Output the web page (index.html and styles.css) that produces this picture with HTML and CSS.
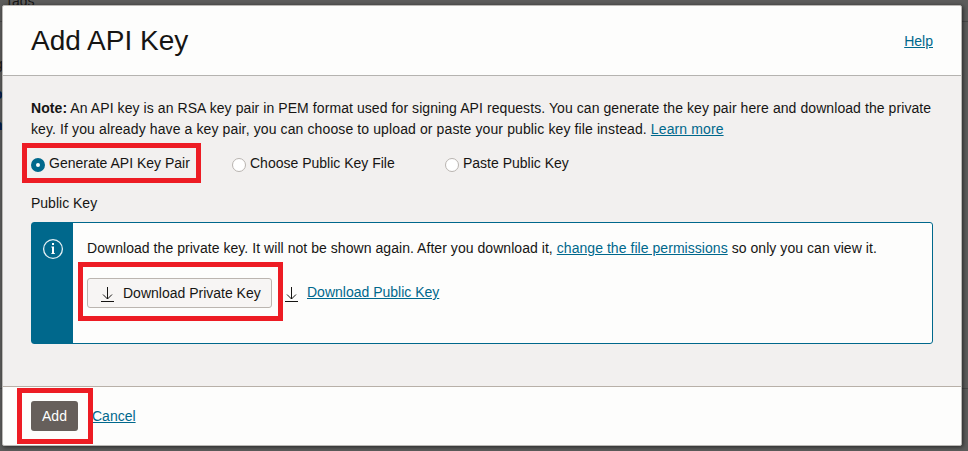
FILE: index.html
```
<!DOCTYPE html>
<html lang="en">
<head>
<meta charset="utf-8">
<title>Add API Key</title>
<link rel="stylesheet" href="styles.css">
</head>
<body>
<div class="backdrop">
  <span class="behind tags">Tags</span>
  <span class="behind rule-top"></span>
  <span class="behind rule-bottom"></span>
  <span class="behind frag-g">g</span>
  <span class="behind frag-o">o</span>
  <span class="behind frag-n">n</span>
</div>
<main class="dialog">
  <header class="dialog-header">
    <h1>Add API Key</h1>
    <a class="link help" href="#">Help</a>
  </header>
  <section class="dialog-body">
    <p class="note"><span class="line-one"><b>Note:</b> An API key is an RSA key pair in PEM format used for signing API requests. You can generate the key pair here and download the private</span><br><span class="line-two">key. If you already have a key pair, you can choose to upload or paste your public key file instead. <a class="link" href="#">Learn more</a></span></p>
    <div class="options">
      <div class="option marked mark-generate"><span class="radio checked"></span><span class="label">Generate API Key Pair</span></div>
      <div class="option"><span class="radio"></span><span class="label">Choose Public Key File</span></div>
      <div class="option"><span class="radio"></span><span class="label">Paste Public Key</span></div>
    </div>
    <div class="field-label">Public Key</div>
    <div class="info">
      <div class="info-side">
        <svg width="22" height="22" viewBox="0 0 22 22"><circle cx="11" cy="11" r="9.4" fill="none" stroke="#e4f0f4" stroke-width="1.3"/><path d="M10 5h2v2h-2zM9.4 8.6H12V15h.8v1H9.4v-1h.6V9.6h-.6z" fill="#fff"/></svg>
      </div>
      <div class="info-content">
        <p class="info-text">Download the private key. It will not be shown again. After you download it, <a class="link" href="#">change the file permissions</a> so only you can view it.</p>
        <div class="downloads">
          <button class="download-button marked mark-download"><svg width="13" height="15" viewBox="0 0 13 15"><path d="M6.5 0v12M2 7.5l4.5 4.5L11 7.5M0 14.5h13" fill="none" stroke="#161513"/></svg><span>Download Private Key</span></button>
          <svg class="public-icon" width="13" height="15" viewBox="0 0 13 15"><path d="M6.5 0v12M2 7.5l4.5 4.5L11 7.5M0 14.5h13" fill="none" stroke="#161513"/></svg>
          <a class="link public-link" href="#">Download Public Key</a>
        </div>
      </div>
    </div>
  </section>
  <footer class="dialog-footer">
    <button class="add-button marked mark-add">Add</button>
    <a class="link" href="#">Cancel</a>
  </footer>
</main>
</body>
</html>
```
FILE: styles.css
```
*, *::after { box-sizing: border-box; }
body {
  margin: 0;
  height: 451px;
  overflow: hidden;
  background: #5c5c5b;
  color: #161513;
  font: 14px/21px "Liberation Sans", Arial, sans-serif;
}
h1, p { margin: 0; font-weight: normal; }
button { font: inherit; color: inherit; margin: 0; }
.link { color: #00688c; text-decoration: underline; }
.backdrop { position: absolute; inset: 0; overflow: hidden; }
.behind { position: absolute; color: #171716; }
.tags { left: 5px; top: -9px; }
.rule-top { left: 0; right: 0; top: 21px; height: 1px; background: #484848; }
.rule-bottom { left: 0; right: 0; top: 388px; height: 1px; background: #484848; }
.frag-g { left: -5px; top: 54px; text-decoration: underline; }
.frag-o { left: -6px; top: 84px; color: #001b4b; font-weight: bold; }
.frag-n { left: -6px; top: 115px; color: #001b4b; font-weight: bold; }
.dialog {
  position: relative;
  display: flex;
  flex-direction: column;
  width: 960px;
  height: 441px;
  margin: 5px 0 0 2px;
  border: 1px solid #bab8b5;
  border-radius: 2px;
  background: #fdfdfc;
  box-shadow: 1px 1px 4px rgba(0, 0, 0, .6);
}
.dialog-header {
  display: flex;
  align-items: center;
  justify-content: space-between;
  height: 70px;
  padding: 0 28px;
  border-bottom: 1px solid #b5b3b0;
}
h1 { font-size: 28px; line-height: 36px; }
.help { padding-top: 2px; }
.dialog-body {
  height: 310px;
  padding: 22px 28px 0;
  background: #f2f0ef;
}
.note { white-space: nowrap; }
.line-one { letter-spacing: .076px; }
.line-two { letter-spacing: .114px; }
.options { display: flex; margin-top: 13px; }
.option { display: flex; align-items: center; height: 21px; width: 201px; }
.option:nth-child(2) { width: 213px; }
.radio {
  width: 14px;
  height: 14px;
  margin: 3px 4px 0 0;
  border: 1px solid #b9b4b0;
  border-radius: 50%;
  background: #fff;
}
.radio.checked { border: 5px solid #00688c; }
.field-label { margin-top: 19px; }
.info {
  display: flex;
  height: 122px;
  margin-top: 8px;
  border: 1px solid #00688c;
  border-radius: 3px;
  background: #fdfdfc;
}
.info-side { width: 41px; padding: 15px 0 0 10px; background: #00688c; }
.info-content { padding: 15px 0 0 14px; white-space: nowrap; }
.info-text { letter-spacing: .05px; }
.downloads { display: flex; margin-top: 19px; }
.download-button {
  display: flex;
  align-items: center;
  width: 185px;
  height: 30px;
  padding: 0 0 0 13px;
  border: 1px solid #bbb5b0;
  border-radius: 3px;
  background: #f7f5f4;
}
.download-button svg { margin: 3px 9px 0 0; }
.public-icon { margin: 9px 9px 0 13px; }
.public-link { margin-top: 4px; }
.dialog-footer {
  display: flex;
  align-items: center;
  height: 59px;
  padding: 0 28px;
  border-top: 1px solid #b8b0a8;
}
.add-button {
  width: 47px;
  height: 30px;
  margin-right: 14px;
  padding: 0;
  border: 0;
  border-radius: 3px;
  background: #665f5b;
  color: #fff;
}
.marked { position: relative; }
.marked::after { content: ""; position: absolute; border: 5px solid #ed1c24; }
.mark-generate::after { left: -9px; top: -10px; width: 179px; height: 40px; }
.mark-download::after { left: -10px; top: -17px; width: 205px; height: 59px; }
.mark-add::after { left: -14px; top: -13px; width: 76px; height: 56px; }
```
